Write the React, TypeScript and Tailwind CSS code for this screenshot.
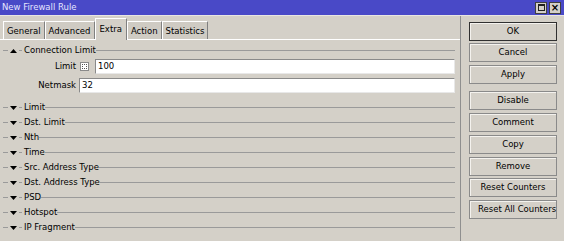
const tabs = ["General", "Advanced", "Extra", "Action", "Statistics"];

const sections = [
  "Limit",
  "Dst. Limit",
  "Nth",
  "Time",
  "Src. Address Type",
  "Dst. Address Type",
  "PSD",
  "Hotspot",
  "IP Fragment",
];

// gap above each button, in px, as measured from the window
const buttons = [
  { label: "OK", top: "mt-0", main: true },
  { label: "Cancel", top: "mt-[2px]" },
  { label: "Apply", top: "mt-[3px]" },
  { label: "Disable", top: "mt-[7px]" },
  { label: "Comment", top: "mt-[3px]" },
  { label: "Copy", top: "mt-[3px]" },
  { label: "Remove", top: "mt-[3px]" },
  { label: "Reset Counters", top: "mt-[2px]" },
  { label: "Reset All Counters", top: "mt-[3px]", left: true },
];

function Arrow({ up }: { up?: boolean }) {
  return (
    <svg width="7" height="4" viewBox="0 0 7 4" className="shrink-0">
      {up ? (
        <polygon points="3.5,0 7,4 0,4" fill="#000" />
      ) : (
        <polygon points="0,0 7,0 3.5,4" fill="#000" />
      )}
    </svg>
  );
}

function SectionHeader({ label, up }: { label: string; up?: boolean }) {
  return (
    <div className="flex h-[15px] items-center pr-[5px]">
      <div className="ml-[3px] h-px w-[5px] bg-[#9a9a9a]" />
      <div className="ml-[2px]">
        <Arrow up={up} />
      </div>
      <div className="ml-[2px] h-px w-[3px] bg-[#9a9a9a]" />
      <span className="ml-[2px] leading-none">{label}</span>
      <div className="h-px flex-1 bg-[#9a9a9a]" />
    </div>
  );
}

function Field({ label, value, toggle }: { label: string; value: string; toggle?: boolean }) {
  return (
    <div className="flex h-[15px] items-center pr-[5px]">
      <span className="w-[76px] text-right">{label}</span>
      {toggle && (
        <div className="ml-[4px] flex h-[9px] w-[9px] items-center justify-center border border-[#8a8a8a] bg-white">
          <div className="h-[5px] w-[5px] border border-dotted border-[#555]" />
        </div>
      )}
      <div
        className={`${toggle ? "ml-[6px]" : "ml-[3px]"} flex h-[15px] flex-1 items-center border border-t-[#8a8a8a] border-l-[#8a8a8a] border-r-[#e8e8e8] border-b-[#e8e8e8] bg-white pl-[2px]`}
      >
        {value}
      </div>
    </div>
  );
}

export default function App() {
  return (
    <div
      className="flex h-[241px] w-[564px] flex-col overflow-hidden bg-[#d4d0c8] text-[8.5px] text-black"
      style={{ fontFamily: '"DejaVu Sans", sans-serif' }}
    >
      <div className="flex h-[15px] items-center justify-between bg-[#4949c7] pl-[2px] pr-[3px]">
        <span className="text-[#e6e6ff]">New Firewall Rule</span>
        <div className="flex gap-[2px]">
          <div className="flex h-[12px] w-[12px] items-center justify-center border border-[#404040] bg-[#d4d0c8]">
            <div className="h-[7px] w-[7px] border border-[#202020] border-t-2" />
          </div>
          <div className="flex h-[12px] w-[12px] items-center justify-center border border-[#404040] bg-[#d4d0c8] text-[10px] font-bold leading-none">
            ×
          </div>
        </div>
      </div>
      <div className="h-px bg-[#e8e6e2]" />

      <div className="flex flex-1">
        <div className="flex w-[461px] flex-col border-r border-r-[#8f8f8f]">
          <div className="flex h-[23px] items-end pl-[3px]">
            {tabs.map((tab) => {
              const active = tab === "Extra";
              return (
                <div
                  key={tab}
                  className={
                    active
                      ? "relative -mb-px flex h-[22px] items-start border border-b-0 border-l-white border-t-white border-r-[#808080] bg-[#d4d0c8] px-[4px] pt-[4px]"
                      : "flex h-[18px] items-center border border-b-0 border-l-white border-t-white border-r-[#808080] bg-[#cfcbc3] px-[3px] pt-px"
                  }
                >
                  {tab}
                </div>
              );
            })}
          </div>
          <div className="flex-1 border-t border-t-white pt-[3px]">
            <SectionHeader label="Connection Limit" up />
            <div className="mt-[1px] flex flex-col gap-[4px]">
              <Field label="Limit" value="100" toggle />
              <Field label="Netmask" value="32" />
            </div>
            <div className="mt-[7px]">
              {sections.map((s) => (
                <SectionHeader key={s} label={s} />
              ))}
            </div>
          </div>
        </div>

        <div className="flex flex-col pl-[8px] pt-[6px]">
          {buttons.map((b) => (
            <div
              key={b.label}
              className={`${b.top} flex h-[19px] w-[88px] shrink-0 items-center overflow-hidden whitespace-nowrap border ${
                b.main ? "border-[#303030]" : "border-[#8a8a8a]"
              } ${b.left ? "justify-start pl-[8px]" : "justify-center"} bg-[#d4d0c8] shadow-[inset_1px_1px_0_#f4f2ee]`}
            >
              {b.label}
            </div>
          ))}
        </div>
      </div>
    </div>
  );
}
